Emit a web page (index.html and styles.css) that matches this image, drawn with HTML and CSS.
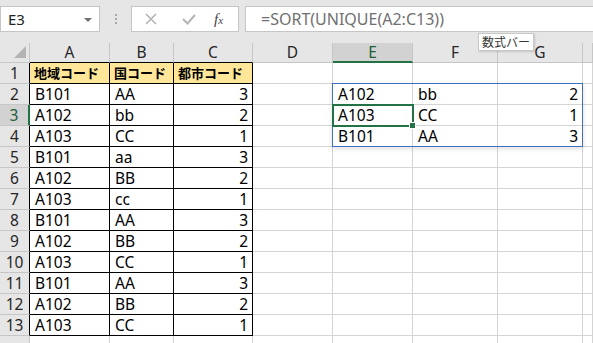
FILE: index.html
```html
<!DOCTYPE html>
<html>
  <head>
    <title>SORT UNIQUE</title>
    <link rel="stylesheet" href="styles.css">
  </head>
  <body>
    <div class="toolbar">
      <div class="namebox">
        <span>E3</span>
        <span class="caret"></span>
      </div>
      <div class="grip"><i></i><i></i><i></i></div>
      <div class="fxbox">
        <svg class="icon" width="14" height="14" viewBox="0 0 14 14">
          <path d="M2 2 L12 12 M12 2 L2 12" stroke="#b4b4b4" stroke-width="1.6" fill="none" />
        </svg>
        <svg class="icon" width="16" height="14" viewBox="0 0 16 14">
          <path d="M2 7 L6.5 11.5 L14 3" stroke="#b4b4b4" stroke-width="2" fill="none" />
        </svg>
        <span class="fx">f<small>x</small></span>
      </div>
      <div class="formula">=SORT(UNIQUE(A2:C13))</div>
    </div>

    <div class="tip">数式バー</div>

    <div class="sheet">
      <div class="row head">
        <div class="c corner"><span class="tri"></span></div>
        <div class="c col t">A</div>
        <div class="c col t">B</div>
        <div class="c col t">C</div>
        <div class="c col">D</div>
        <div class="c col sel">E</div>
        <div class="c col">F</div>
        <div class="c col">G</div>
        <div class="c col"></div>
      </div>

      <div class="row">
        <div class="c rh in">1</div>
        <div class="c t hd">地域コード</div>
        <div class="c t hd">国コード</div>
        <div class="c t hd">都市コード</div>
        <div class="c"></div><div class="c"></div><div class="c"></div><div class="c"></div><div class="c"></div>
      </div>

      <div class="row">
        <div class="c rh in">2</div>
        <div class="c t">B101</div>
        <div class="c t">AA</div>
        <div class="c t num">3</div>
        <div class="c"></div>
        <div class="c spill-host">A102<div class="spill"></div></div>
        <div class="c">bb</div>
        <div class="c num">2</div>
        <div class="c"></div>
      </div>

      <div class="row">
        <div class="c rh in rsel">3</div>
        <div class="c t">A102</div>
        <div class="c t">bb</div>
        <div class="c t num">2</div>
        <div class="c"></div>
        <div class="c spill-host">A103<div class="active"><span class="handle"></span></div></div>
        <div class="c">CC</div>
        <div class="c num">1</div>
        <div class="c"></div>
      </div>

      <div class="row">
        <div class="c rh in">4</div>
        <div class="c t">A103</div>
        <div class="c t">CC</div>
        <div class="c t num">1</div>
        <div class="c"></div>
        <div class="c">B101</div>
        <div class="c">AA</div>
        <div class="c num">3</div>
        <div class="c"></div>
      </div>

      <div class="row">
        <div class="c rh in">5</div>
        <div class="c t">B101</div>
        <div class="c t">aa</div>
        <div class="c t num">3</div>
        <div class="c"></div><div class="c"></div><div class="c"></div><div class="c"></div><div class="c"></div>
      </div>

      <div class="row">
        <div class="c rh in">6</div>
        <div class="c t">A102</div>
        <div class="c t">BB</div>
        <div class="c t num">2</div>
        <div class="c"></div><div class="c"></div><div class="c"></div><div class="c"></div><div class="c"></div>
      </div>

      <div class="row">
        <div class="c rh in">7</div>
        <div class="c t">A103</div>
        <div class="c t">cc</div>
        <div class="c t num">1</div>
        <div class="c"></div><div class="c"></div><div class="c"></div><div class="c"></div><div class="c"></div>
      </div>

      <div class="row">
        <div class="c rh in">8</div>
        <div class="c t">B101</div>
        <div class="c t">AA</div>
        <div class="c t num">3</div>
        <div class="c"></div><div class="c"></div><div class="c"></div><div class="c"></div><div class="c"></div>
      </div>

      <div class="row">
        <div class="c rh in">9</div>
        <div class="c t">A102</div>
        <div class="c t">BB</div>
        <div class="c t num">2</div>
        <div class="c"></div><div class="c"></div><div class="c"></div><div class="c"></div><div class="c"></div>
      </div>

      <div class="row">
        <div class="c rh in">10</div>
        <div class="c t">A103</div>
        <div class="c t">CC</div>
        <div class="c t num">1</div>
        <div class="c"></div><div class="c"></div><div class="c"></div><div class="c"></div><div class="c"></div>
      </div>

      <div class="row">
        <div class="c rh in">11</div>
        <div class="c t">B101</div>
        <div class="c t">AA</div>
        <div class="c t num">3</div>
        <div class="c"></div><div class="c"></div><div class="c"></div><div class="c"></div><div class="c"></div>
      </div>

      <div class="row">
        <div class="c rh in">12</div>
        <div class="c t">A102</div>
        <div class="c t">BB</div>
        <div class="c t num">2</div>
        <div class="c"></div><div class="c"></div><div class="c"></div><div class="c"></div><div class="c"></div>
      </div>

      <div class="row">
        <div class="c rh in">13</div>
        <div class="c t">A103</div>
        <div class="c t">CC</div>
        <div class="c t num">1</div>
        <div class="c"></div><div class="c"></div><div class="c"></div><div class="c"></div><div class="c"></div>
      </div>

      <div class="row">
        <div class="c rh"></div>
        <div class="c"></div><div class="c"></div><div class="c"></div><div class="c"></div>
        <div class="c"></div><div class="c"></div><div class="c"></div><div class="c"></div>
      </div>
    </div>
  </body>
</html>
```

FILE: styles.css
```css
body {
  margin: 0;
  background-color: #e6e6e6;
  font-family: "Noto Sans", "Noto Sans CJK JP", sans-serif;
  color: #000;
  overflow: hidden;
  position: relative;
}

/* formula bar */
.toolbar {
  height: 43px;
  box-sizing: border-box;
  padding-top: 6px;
  display: flex;
  align-items: flex-start;
}
.namebox {
  width: 100px;
  height: 26px;
  box-sizing: border-box;
  border: 1px solid #c6c6c6;
  background-color: white;
  display: flex;
  align-items: center;
  justify-content: space-between;
  padding: 0 7px 0 7px;
  font-size: 15px;
  color: #222;
}
.caret {
  width: 0;
  height: 0;
  border-left: 4px solid transparent;
  border-right: 4px solid transparent;
  border-top: 4px solid #707070;
  margin-top: 1px;
}
.grip {
  width: 31px;
  height: 26px;
  display: flex;
  flex-direction: column;
  align-items: center;
  justify-content: center;
  gap: 2px;
}
.grip i {
  width: 2px;
  height: 2px;
  background-color: #a8a8a8;
}
.fxbox {
  width: 108px;
  height: 26px;
  box-sizing: border-box;
  border: 1px solid #c6c6c6;
  background-color: white;
  display: flex;
  align-items: center;
  padding-left: 12px;
}
.fxbox .icon + .icon {
  margin-left: 23px;
}
.fx {
  margin-left: 17px;
  font-family: "Liberation Serif", serif;
  font-style: italic;
  font-size: 15px;
  color: #444;
}
.fx small {
  font-size: 11px;
}
.formula {
  margin-left: 6px;
  flex: 1;
  height: 26px;
  box-sizing: border-box;
  border: 1px solid #c6c6c6;
  border-right: none;
  background-color: white;
  padding-left: 15px;
  font-size: 16px;
  line-height: 24px;
  color: #707070;
}

.tip {
  position: absolute;
  left: 478px;
  top: 33px;
  height: 18px;
  box-sizing: border-box;
  padding: 0 3px;
  border: 1px solid #c8c8c8;
  background-color: white;
  font-family: "Noto Sans CJK JP", sans-serif;
  font-size: 12px;
  line-height: 16px;
  color: #333;
  box-shadow: 1px 1px 2px rgba(0, 0, 0, 0.15);
  z-index: 3;
}

/* grid */
.sheet {
  background-color: white;
}
.row {
  display: grid;
  grid-template-columns: 30px 80px 64px 79px 80px 80px 85px 85px 1fr;
  height: 21px;
}
.c {
  box-sizing: border-box;
  border-right: 1px solid #d4d4d4;
  border-bottom: 1px solid #d4d4d4;
  padding: 0 4px 0 5px;
  font-size: 15.5px;
  line-height: 20px;
  white-space: nowrap;
}
.num {
  text-align: right;
}
.t {
  border-right-color: #000;
  border-bottom-color: #000;
}
.hd {
  background-color: #ffe699;
  font-family: "Noto Sans CJK JP", sans-serif;
  font-weight: bold;
  font-size: 13px;
  padding-left: 4px;
}

.head {
  height: 20px;
  background-color: #e6e6e6;
}
.head .c {
  border-right-color: #c6c6c6;
  border-bottom-color: #c6c6c6;
}
.col {
  text-align: center;
  line-height: 19px;
  color: #262626;
  padding: 0;
}
.head .t {
  border-bottom-color: #000;
}
.head .sel {
  background-color: #d2d2d2;
  border-bottom: 2px solid #217346;
  line-height: 18px;
  color: #1d5f38;
}
.corner {
  display: flex;
  justify-content: flex-end;
  align-items: flex-end;
  padding: 0 3px 4px 0;
}
.tri {
  width: 0;
  height: 0;
  border-left: 12px solid transparent;
  border-bottom: 12px solid #b4b4b4;
}

.rh {
  background-color: #e6e6e6;
  text-align: center;
  padding: 0;
  color: #262626;
  border-bottom-color: #c6c6c6;
  border-right-color: #c6c6c6;
}
.rh.in {
  border-right-color: #000;
}
.rh.rsel {
  background-color: #d2d2d2;
  border-right: 2px solid #217346;
  color: #1d5f38;
}

/* spill range and active cell */
.spill-host {
  position: relative;
}
.spill {
  position: absolute;
  left: -1px;
  top: -1px;
  width: 251px;
  height: 64px;
  box-sizing: border-box;
  border: 1px solid #3f6fc2;
  box-shadow: 0 2px 5px rgba(0, 0, 0, 0.12);
  pointer-events: none;
}
.active {
  position: absolute;
  left: -1px;
  top: -1px;
  width: 82px;
  height: 23px;
  box-sizing: border-box;
  border: 2px solid #217346;
  z-index: 2;
}
.handle {
  position: absolute;
  right: -4px;
  bottom: -4px;
  width: 5px;
  height: 5px;
  background-color: #217346;
  border: 1px solid white;
}
```
